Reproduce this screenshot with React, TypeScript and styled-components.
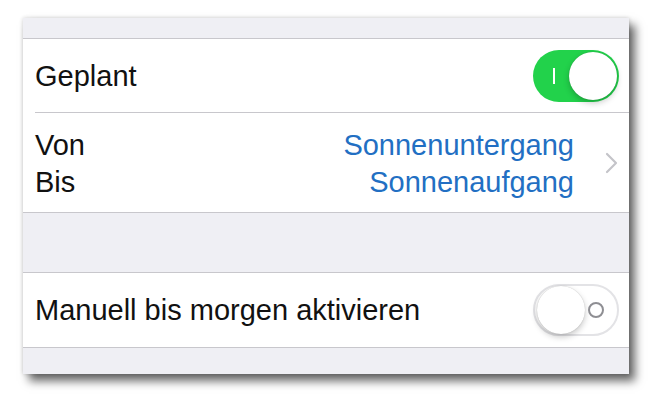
import styled, { createGlobalStyle } from 'styled-components'

const GlobalStyle = createGlobalStyle`
  html, body {
    margin: 0;
    padding: 0;
    background: #ffffff;
  }
  body {
    font-family: "Liberation Sans", Arial, sans-serif;
    color: #111111;
  }
`

const Page = styled.div`
  width: 665px;
  height: 405px;
  padding: 18px 0 0 23px;
  box-sizing: border-box;
`

const Card = styled.div`
  width: 606px;
  height: 356px;
  display: flex;
  flex-direction: column;
  background: #efeff4;
  box-shadow:
    6px 7px 9px rgba(0, 0, 0, 0.6),
    0 0 4px rgba(0, 0, 0, 0.18);
`

const Band = styled.div<{ $h: number }>`
  height: ${p => p.$h}px;
  flex: none;
`

const Group = styled.div`
  background: #ffffff;
  border-top: 1px solid #c8c7cc;
  border-bottom: 1px solid #c8c7cc;
  display: flex;
  flex-direction: column;
`

const Row = styled.div<{ $h: number; $divider?: boolean }>`
  height: ${p => p.$h}px;
  flex: none;
  display: flex;
  align-items: center;
  padding: 0 10px 0 12px;
  position: relative;
  box-sizing: border-box;
  ${p =>
    p.$divider &&
    `
    &::after {
      content: '';
      position: absolute;
      left: 12px;
      right: 0;
      bottom: 0;
      height: 1px;
      background: #c8c7cc;
    }
  `}
`

const Label = styled.div`
  font-size: 29px;
  flex: 1;
`

const Stack = styled.div<{ $align?: string; $color?: string }>`
  display: flex;
  flex-direction: column;
  font-size: 29px;
  line-height: 37px;
  text-align: ${p => p.$align || 'left'};
  color: ${p => p.$color || '#111111'};
  padding-top: 2px;
`

const Spacer = styled.div`
  flex: 1;
`

const Chevron = styled.svg`
  margin-left: 31px;
  margin-right: 1px;
  flex: none;
`

const Switch = styled.div<{ $on: boolean }>`
  width: 86px;
  height: 52px;
  border-radius: 26px;
  box-sizing: border-box;
  flex: none;
  position: relative;
  background: ${p => (p.$on ? '#22d24b' : '#ffffff')};
  border: ${p => (p.$on ? 'none' : '2px solid #e3e3e6')};
  display: flex;
  align-items: center;
  justify-content: ${p => (p.$on ? 'flex-end' : 'flex-start')};
  padding: 2px;
`

const Knob = styled.div`
  width: 48px;
  height: 48px;
  border-radius: 50%;
  background: #ffffff;
  box-shadow:
    0 3px 6px rgba(0, 0, 0, 0.22),
    0 0 1px rgba(0, 0, 0, 0.25);
`

const OnMark = styled.div`
  position: absolute;
  left: 20px;
  top: 18px;
  width: 2px;
  height: 16px;
  background: #ffffff;
`

const OffMark = styled.div`
  position: absolute;
  right: 13px;
  top: 16px;
  width: 12px;
  height: 12px;
  border-radius: 50%;
  border: 2px solid #8e8e93;
`

function Toggle({ on }: { on: boolean }) {
  return (
    <Switch $on={on}>
      {on ? <OnMark /> : <OffMark />}
      <Knob />
    </Switch>
  )
}

export default function App() {
  return (
    <>
      <GlobalStyle />
      <Page>
        <Card>
          <Band $h={20} />
          <Group>
            <Row $h={74} $divider>
              <Label>Geplant</Label>
              <Toggle on />
            </Row>
            <Row $h={99}>
              <Stack>
                <span>Von</span>
                <span>Bis</span>
              </Stack>
              <Spacer />
              <Stack $align="right" $color="#226fc3">
                <span>Sonnenuntergang</span>
                <span>Sonnenaufgang</span>
              </Stack>
              <Chevron width="13" height="22" viewBox="0 0 13 22">
                <polyline
                  points="2,2 11,11 2,20"
                  fill="none"
                  stroke="#c4c4c9"
                  strokeWidth="2.2"
                  strokeLinecap="round"
                  strokeLinejoin="round"
                />
              </Chevron>
            </Row>
          </Group>
          <Band $h={59} />
          <Group>
            <Row $h={74}>
              <Label>Manuell bis morgen aktivieren</Label>
              <Toggle on={false} />
            </Row>
          </Group>
        </Card>
      </Page>
    </>
  )
}
